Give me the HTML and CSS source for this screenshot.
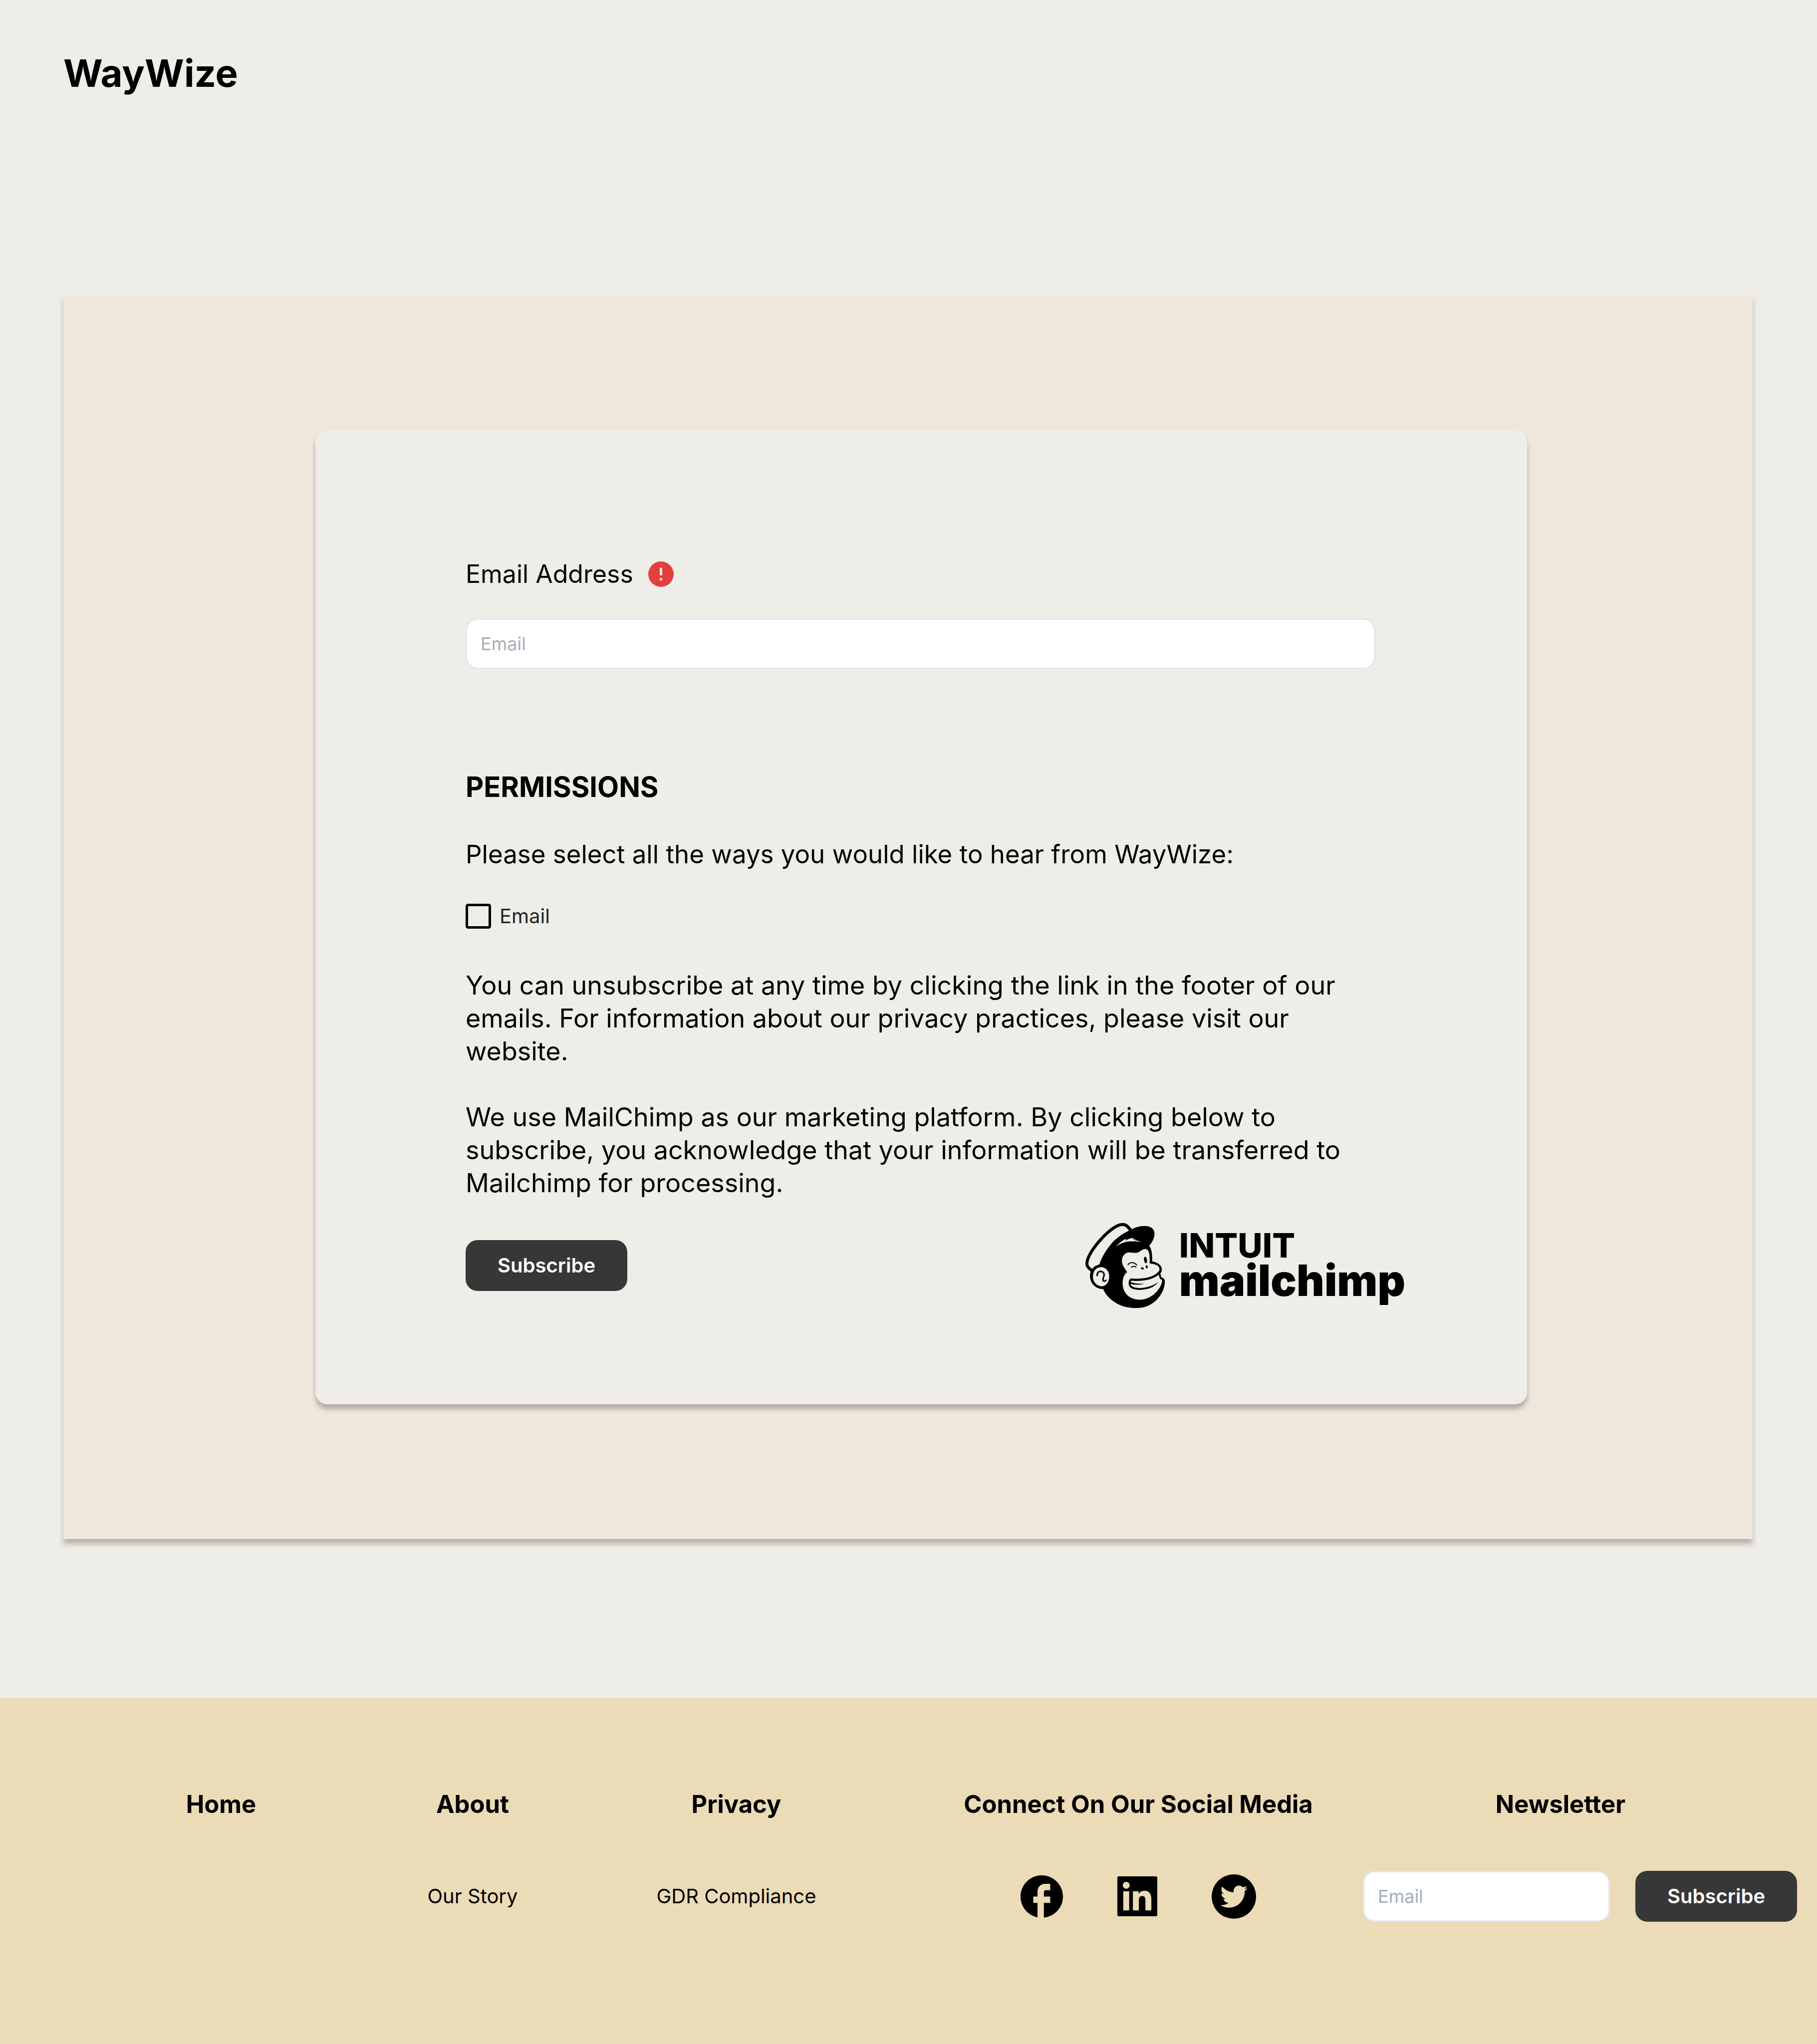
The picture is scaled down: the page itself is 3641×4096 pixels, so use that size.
FILE: index.html
```html
<!DOCTYPE html>
<html lang="en">
<head>
  <meta charset="utf-8">
  <meta name="viewport" content="width=device-width, initial-scale=1">
  <title>WayWize</title>
  <link rel="stylesheet" href="styles.css">
</head>
<body>
  <header class="site-header">
    <a class="brand" href="#">WayWize</a>
  </header>

  <main class="panel">
    <form class="card">
      <div class="label-row">
        <label class="field-label" for="email">Email Address</label>
        <svg class="error-icon" viewBox="0 0 20 20" role="img" aria-label="Required">
          <circle cx="10" cy="10" r="10" fill="#e53e3e"/>
          <path d="M9 5h2v6H9zM9 13h2v2H9z" fill="#efe9df"/>
        </svg>
      </div>
      <input class="text-input" id="email" type="email" placeholder="Email">

      <h1 class="card-title">PERMISSIONS</h1>
      <p class="lead">Please select all the ways you would like to hear from WayWize:</p>
      <div class="check-row">
        <input class="check" id="by-email" type="checkbox">
        <label class="check-label" for="by-email">Email</label>
      </div>

      <div class="legal">
        <p>You can unsubscribe at any time by clicking the link in the footer of our emails. For information about our privacy practices, please visit our website.</p>
        <p>We use MailChimp as our marketing platform. By clicking below to subscribe, you acknowledge that your information will be transferred to Mailchimp for processing.</p>
      </div>

      <div class="card-actions">
        <button class="button" type="submit">Subscribe</button>
        <div class="mailchimp">
          <svg class="mailchimp-face" viewBox="60 64 530 570" aria-hidden="true">
            <path d="M362 116C345 95 335 82 320 78C298 72 262 86 222 118C165 164 100 245 80 295C68 325 66 345 76 358C84 368 92 374 102 382" fill="#eeede8" stroke="#000" stroke-width="20"/>
            <path d="M360 112C395 92 440 82 475 88C505 95 520 115 519 140C517 170 500 200 483 218C497 235 502 260 503 290L504 322C530 327 560 340 566 365C570 385 562 395 558 402C560 415 562 425 570 430C585 434 589 445 587 465C583 530 530 600 460 622C400 640 320 632 270 602C225 577 190 540 178 505C130 505 92 470 90 420C90 385 110 350 152 342C170 290 200 240 240 195C275 158 320 130 360 112Z"/>
            <g fill="#eeede8">
              <path d="M165 360C200 362 218 390 218 422C218 455 200 485 170 487C135 487 108 458 110 420C112 385 130 360 165 360Z"/>
              <path d="M258 228C280 205 300 185 331 170L325 184C345 172 365 165 380 165L374 176L392 173L387 181C405 183 420 188 432 194C410 188 380 187 350 189C310 192 280 210 258 228Z"/>
              <path d="M337 393C325 372 304 350 302 320C302 285 325 262 350 262C375 262 385 268 405 264C430 256 435 240 458 239C478 242 484 260 486 290L487 335C500 338 525 340 540 350C556 362 552 385 548 400L555 438C566 440 570 444 569 455C555 520 490 576 420 576C360 575 309 540 307 470C306 440 315 408 337 393Z"/>
            </g>
            <g fill="none" stroke="#000" stroke-linecap="round">
              <path d="M138 416C136 395 152 385 166 389C184 394 187 408 182 422C177 434 172 450 184 453C189 454 194 451 196 447" stroke-width="10"/>
              <path d="M364 443C400 445 450 446 495 430C525 420 545 405 557 386" stroke-width="15"/>
              <path d="M550 402C552 418 556 428 560 436" stroke-width="9"/>
              <path d="M362 442C350 450 350 478 362 490C385 508 430 508 470 498" stroke-width="12"/>
              <path d="M343 344C352 326 385 324 400 346" stroke-width="7"/>
              <path d="M364 361C371 353 388 353 396 359" stroke-width="6"/>
            </g>
            <path d="M470 492C500 485 525 473 543 459C528 480 502 498 470 504Z"/>
            <path d="M358 456C380 470 415 470 452 470C420 479 380 478 356 470Z"/>
            <ellipse cx="459" cy="312" rx="10" ry="22" transform="rotate(-8 459 312)"/>
            <ellipse cx="438" cy="368" rx="10" ry="7" transform="rotate(20 438 368)"/>
            <ellipse cx="467" cy="357" rx="7" ry="10"/>
          </svg>
          <div class="mailchimp-text">
            <span class="mailchimp-parent">INTUIT</span>
            <span class="mailchimp-name">mailchimp</span>
          </div>
        </div>
      </div>
    </form>
  </main>

  <footer class="site-footer">
    <div class="footer-col">
      <a class="footer-head" href="#">Home</a>
    </div>
    <div class="footer-col">
      <a class="footer-head" href="#">About</a>
      <a class="footer-link" href="#">Our Story</a>
    </div>
    <div class="footer-col">
      <a class="footer-head" href="#">Privacy</a>
      <a class="footer-link" href="#">GDR Compliance</a>
    </div>
    <div class="footer-col footer-social">
      <h2 class="footer-head">Connect On Our Social Media</h2>
      <div class="social-row">
        <a class="social" href="#" aria-label="Facebook">
          <svg width="85" height="85" viewBox="2 2 20 20"><path d="M22 12c0-5.52-4.48-10-10-10S2 6.48 2 12c0 4.84 3.44 8.87 8 9.8V15H8v-3h2V9.5C10 7.57 11.57 6 13.5 6H16v3h-2c-.55 0-1 .45-1 1v2h3v3h-3v6.95c5.05-.5 9-4.76 9-9.95z"/></svg>
        </a>
        <a class="social" href="#" aria-label="LinkedIn">
          <svg width="80" height="80" viewBox="0 0 24 24"><path fill-rule="evenodd" d="M.9 0H23.1A.9.9 0 0 1 24 .9V23.1A.9.9 0 0 1 23.1 24H.9A.9.9 0 0 1 0 23.1V.9A.9.9 0 0 1 .9 0ZM20.447 20.452h-3.554v-5.569c0-1.328-.027-3.037-1.852-3.037-1.853 0-2.136 1.445-2.136 2.939v5.667H9.351V9h3.414v1.561h.046c.477-.9 1.637-1.85 3.37-1.85 3.601 0 4.267 2.37 4.267 5.455v6.286zM5.337 7.433c-1.144 0-2.063-.926-2.063-2.065 0-1.138.92-2.063 2.063-2.063 1.14 0 2.064.925 2.064 2.063 0 1.139-.925 2.065-2.064 2.065zm1.782 13.019H3.555V9h3.564v11.452z"/></svg>
        </a>
        <a class="social" href="#" aria-label="Twitter">
          <svg width="89" height="89" viewBox="0 0 24 24"><circle cx="12" cy="12" r="12"/><path transform="translate(4.7 4.7) scale(.61)" fill="#ebdbb7" d="M23.953 4.57a10 10 0 01-2.825.775 4.958 4.958 0 002.163-2.723c-.951.555-2.005.959-3.127 1.184a4.92 4.92 0 00-8.384 4.482C7.69 8.095 4.067 6.13 1.64 3.162a4.822 4.822 0 00-.666 2.475c0 1.71.87 3.213 2.188 4.096a4.904 4.904 0 01-2.228-.616v.06a4.923 4.923 0 003.946 4.827 4.996 4.996 0 01-2.212.085 4.936 4.936 0 004.604 3.417 9.867 9.867 0 01-6.102 2.105c-.39 0-.779-.023-1.17-.067a13.995 13.995 0 007.557 2.209c9.053 0 13.998-7.496 13.998-13.985 0-.21 0-.42-.015-.63A9.935 9.935 0 0024 4.59z"/></svg>
        </a>
      </div>
    </div>
    <form class="footer-col">
      <label class="footer-head footer-head-newsletter" for="newsletter">Newsletter</label>
      <div class="newsletter-row">
        <input class="text-input" id="newsletter" type="email" placeholder="Email">
        <button class="button" type="submit">Subscribe</button>
      </div>
    </form>
  </footer>
</body>
</html>
```
FILE: styles.css
```css
*,
*::before,
*::after {
  box-sizing: border-box;
}

body {
  margin: 0;
  min-height: 100vh;
  display: flex;
  flex-direction: column;
  background: #eeede8;
  color: #000;
  font-family: Inter, "Liberation Sans", sans-serif;
}

h1,
h2,
p {
  margin: 0;
}

a {
  color: inherit;
  text-decoration: none;
}

svg {
  display: block;
  flex: none;
}

.site-header {
  padding: 98px 127px 398px;
}

.brand {
  display: inline-block;
  font-size: 76px;
  line-height: 96px;
  font-weight: 700;
  vertical-align: top;
}

/* Sign-up panel */
.panel {
  margin: 0 129px 319px 127px;
  padding: 270px 452px 270px 505px;
  background: #efe7db;
  box-shadow: 0 10px 10px rgba(0, 0, 0, 0.25);
}

.card {
  display: flex;
  flex-direction: column;
  padding: 256px 244px 192px 301px;
  border-radius: 24px;
  background: #eeede8;
  box-shadow: 0 10px 10px rgba(0, 0, 0, 0.25);
}

.card > .text-input {
  margin-right: 60px;
}

.label-row {
  display: flex;
  align-items: center;
  gap: 30px;
  margin-bottom: 57px;
}

.field-label,
.lead {
  font-size: 51px;
  line-height: 66px;
}

.field-label {
  font-size: 50px;
  line-height: 64px;
}

.error-icon {
  width: 51px;
  height: 51px;
}

.text-input {
  width: auto;
  min-width: 0;
  height: 102px;
  padding: 0 27px;
  border: 3px solid #e2e8f0;
  border-radius: 24px;
  background: #fff;
  color: #000;
  font: 400 36px/48px Inter, "Liberation Sans", sans-serif;
}

.text-input::placeholder {
  color: #a5afb8;
  opacity: 1;
}

.card-title {
  margin: 200px 0 66px;
  font-size: 56px;
  line-height: 72px;
  font-weight: 700;
}

.check-row {
  display: flex;
  align-items: center;
  gap: 17px;
  margin: 66px 0 81px;
}

.check {
  appearance: none;
  width: 51px;
  height: 50px;
  margin: 0;
  border: 5px solid #000;
  border-radius: 5px;
}

.check:checked {
  background: #000;
}

.check-label {
  color: #212529;
  font-size: 40px;
  line-height: 50px;
}

.legal {
  display: flex;
  flex-direction: column;
  gap: 66px;
  max-width: 1790px;
  font-size: 52px;
  line-height: 66px;
}

.card-actions {
  display: flex;
  align-items: center;
  justify-content: space-between;
  margin-top: 46px;
}

.button {
  flex: none;
  width: 324px;
  height: 102px;
  padding: 0;
  border: 0;
  border-radius: 24px;
  background: #373737;
  color: #fff;
  font: 600 40px/48px Inter, "Liberation Sans", sans-serif;
}

.mailchimp {
  display: flex;
  gap: 28px;
}

.mailchimp-face {
  width: 160px;
  height: 172px;
}

.mailchimp-text {
  display: flex;
  flex-direction: column;
  padding-top: 11px;
}

.mailchimp-parent {
  font-size: 68px;
  line-height: 68px;
  font-weight: 800;
}

.mailchimp-name {
  font-size: 86px;
  line-height: 74px;
  font-weight: 900;
}

/* Footer */
.site-footer {
  flex: 1;
  display: grid;
  grid-template-columns:
    minmax(0, 504fr) minmax(0, 504fr) minmax(0, 553fr)
    minmax(0, 979fr) minmax(0, 870fr);
  align-items: start;
  padding: 181px 40px 245px 191px;
  background: #ebdbb7;
}

.footer-col {
  display: flex;
  flex-direction: column;
  align-items: center;
  gap: 101px;
}

.footer-social {
  padding-left: 79px;
}

.footer-head {
  font-size: 49px;
  line-height: 64px;
  font-weight: 700;
}

.footer-head-newsletter {
  padding-right: 78px;
}

.footer-link {
  font-size: 40px;
  line-height: 102px;
}

.social-row {
  display: flex;
  align-items: center;
  gap: 109px;
  height: 102px;
}

.newsletter-row {
  display: flex;
  gap: 51px;
  width: 100%;
}

.newsletter-row .text-input {
  flex: 1;
}
```
